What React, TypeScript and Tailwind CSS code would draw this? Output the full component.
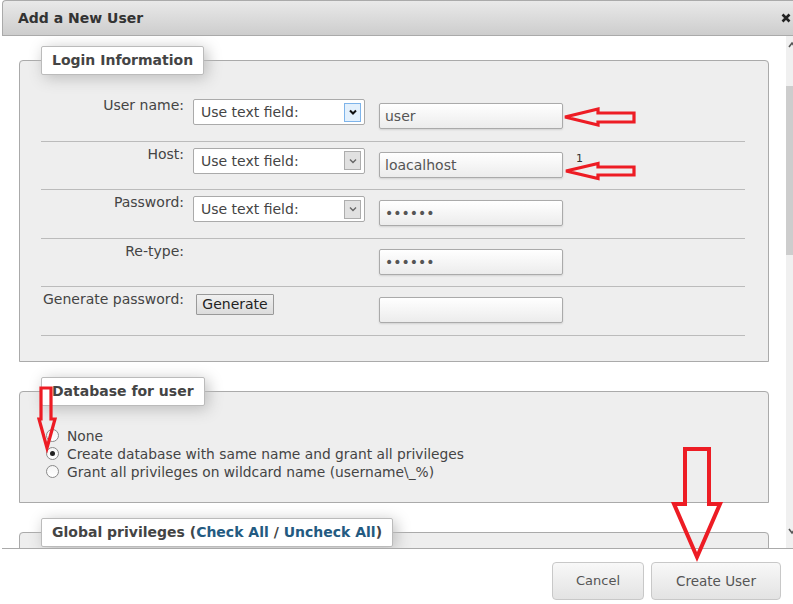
import clsx from 'clsx';

function Chevron({ active }: { active?: boolean }) {
  return (
    <span
      className={clsx(
        'flex h-[19px] w-[17px] items-center justify-center border',
        active ? 'border-[#7eb4ea] bg-[#e3f0fc]' : 'border-[#adadad] bg-[#e1e1e1]'
      )}
    >
      <svg width="8" height="6" viewBox="0 0 8 6">
        <path d="M1 1.5 L4 4.5 L7 1.5" fill="none" stroke={active ? '#111' : '#666'} strokeWidth={active ? 2 : 1.4} />
      </svg>
    </span>
  );
}

function FakeSelect({ active }: { active?: boolean }) {
  return (
    <div className="mt-[6px] flex h-[26px] w-[172px] items-center justify-between rounded-[2px] border border-[#aaa] bg-white pl-[7px] pr-[3px]">
      <span className="pt-[1px] text-[14px] leading-[17px] text-[#444]">Use text field:</span>
      <Chevron active={active} />
    </div>
  );
}

function TextBox({ value, type = 'text' }: { value?: string; type?: string }) {
  return (
    <input
      type={type}
      readOnly
      defaultValue={value}
      className="mt-[10px] h-[26px] w-[184px] rounded-[2px] border border-[#aaa] bg-gradient-to-b from-white to-[#ececec] px-[5px] text-[14px] text-[#555] shadow-[0_1px_2px_rgba(0,0,0,0.12)] outline-none"
    />
  );
}

function Row({ label, children }: { label: string; children: React.ReactNode }) {
  return (
    <div className="flex h-[48.5px] items-start border-b border-[#bbb]">
      <label className="w-[143px] shrink-0 pt-[4px] text-right text-[14px] leading-[17px] text-[#444]">{label}</label>
      {children}
    </div>
  );
}

function Radio({ checked, label }: { checked?: boolean; label: string }) {
  return (
    <div className="flex h-[18px] items-center">
      <span className="ml-[5px] flex h-[13px] w-[13px] items-center justify-center rounded-full border border-[#8a8a8a] bg-gradient-to-b from-[#f4f4f4] to-white">
        {checked && <span className="h-[5px] w-[5px] rounded-full bg-[#222]" />}
      </span>
      <span className="ml-[8px] text-[13.8px] leading-[18px] text-[#444]">{label}</span>
    </div>
  );
}

const legendCls =
  'rounded-[2px] border border-[#bbb] bg-white px-[10px] py-[5px] text-[14px] font-bold leading-[17px] text-[#444] shadow-[3px_3px_15px_#bbb]';

export default function App() {
  return (
    <div className="relative h-[604px] w-[793px] overflow-hidden bg-white font-['DejaVu_Sans',Verdana,sans-serif]">
      <div className="flex h-full flex-col pl-[2px]">
        {/* title bar */}
        <div className="flex h-[36px] shrink-0 items-center justify-between rounded-tl-[4px] border border-r-0 border-[#aaa] bg-gradient-to-b from-[#e9e9e9] to-[#cdcdcd] pl-[15px] pr-[2px]">
          <span className="pt-[1px] text-[14px] font-bold text-[#333]">Add a New User</span>
          <svg width="10" height="10" viewBox="0 0 10 10" className="mb-[1px]">
            <path d="M1.5 1.5 L8.5 8.5 M8.5 1.5 L1.5 8.5" stroke="#222" strokeWidth="2.6" />
          </svg>
        </div>

        {/* body */}
        <div className="flex h-[512px] shrink-0">
          <div className="flex-1 overflow-hidden pt-[10px]">
            <fieldset className="mx-[17px] rounded-t-[4px] border border-[#aaa] bg-[#eee] pb-[25px] pl-[21px] pr-[23px] pt-[18px]">
              <legend className={legendCls}>Login Information</legend>
              <Row label="User name:">
                <div className="ml-[9px]"><FakeSelect active /></div>
                <div className="ml-[14px]"><TextBox value="user" /></div>
              </Row>
              <Row label="Host:">
                <div className="ml-[9px]"><FakeSelect /></div>
                <div className="ml-[14px]"><TextBox value="loacalhost" /></div>
                <span className="ml-[13px] mt-[11px] text-[11px] leading-[12px] text-[#333]">1</span>
              </Row>
              <Row label="Password:">
                <div className="ml-[9px]"><FakeSelect /></div>
                <div className="ml-[14px]"><TextBox type="password" value="aaaaaa" /></div>
              </Row>
              <Row label="Re-type:">
                <div className="ml-[195px]"><TextBox type="password" value="aaaaaa" /></div>
              </Row>
              <Row label="Generate password:">
                <div className="ml-[12px] w-[169px]">
                  <button className="mt-[7px] h-[21px] w-[78px] rounded-[1px] border border-[#999] bg-gradient-to-b from-[#f0f0f0] to-[#dcdcdc] text-[14px] leading-[17px] text-[#222]">
                    Generate
                  </button>
                </div>
                <div className="ml-[14px]"><TextBox /></div>
              </Row>
            </fieldset>

            <fieldset className="mx-[17px] mt-[15px] rounded-t-[4px] border border-[#aaa] bg-[#eee] pb-[21px] pl-[21px] pr-[23px] pt-[21px]">
              <legend className={legendCls}>Database for user</legend>
              <Radio label="None" />
              <Radio checked label="Create database with same name and grant all privileges" />
              <Radio label="Grant all privileges on wildcard name (username\_%)" />
            </fieldset>

            <fieldset className="mx-[17px] mt-[15px] h-[80px] rounded-t-[4px] border border-[#aaa] bg-[#eee] pl-[21px] pr-[23px]">
              <legend className={legendCls}>
                Global privileges (<a className="text-[#235a81]">Check All</a> / <a className="text-[#235a81]">Uncheck All</a>)
              </legend>
            </fieldset>
          </div>

          {/* scrollbar */}
          <div className="flex w-[7px] shrink-0 flex-col bg-[#f0f0f0]">
            <svg width="7" height="17" viewBox="0 0 7 17">
              <path d="M3 11 L6 7 L9 11" fill="none" stroke="#555" strokeWidth="1.6" />
            </svg>
            <div className="mt-[33px] h-[169px] bg-[#cdcdcd]" />
            <div className="flex-1" />
            <svg width="7" height="17" viewBox="0 0 7 17" className="mb-[8px]">
              <path d="M3 6 L6 10 L9 6" fill="none" stroke="#555" strokeWidth="1.6" />
            </svg>
          </div>
        </div>

        {/* footer */}
        <div className="flex flex-1 justify-end gap-[7px] border-t border-[#aaa] bg-white pr-[12px] pt-[13px]">
          <button className="h-[38px] w-[92px] rounded-[4px] border border-[#c8c8c8] bg-gradient-to-b from-[#f8f8f8] to-[#e3e3e3] text-[13px] text-[#555]">
            Cancel
          </button>
          <button className="h-[38px] w-[130px] rounded-[4px] border border-[#c8c8c8] bg-gradient-to-b from-[#f8f8f8] to-[#e3e3e3] text-[13.5px] text-[#555]">
            Create User
          </button>
        </div>
      </div>

      {/* red annotation arrows drawn over the screenshot */}
      <svg className="pointer-events-none absolute inset-0" width="793" height="604" viewBox="0 0 793 604">
        <g fill="none" stroke="#ed1c24" strokeWidth="3.2" strokeLinejoin="miter">
          <polygon points="565,117 598,109 598,113 634,113 634,122 598,122 598,125" />
          <polygon points="566,171 598,163.5 598,167 634,167 634,175 598,175 598,178.5" />
          <polygon points="41,388 51,388 51,419 55,419 47,448 39,419 41,419" />
          <polygon points="685,449 709,449 709,504 720,504 697,557 674,504 685,504" strokeWidth="4" />
        </g>
      </svg>
    </div>
  );
}
